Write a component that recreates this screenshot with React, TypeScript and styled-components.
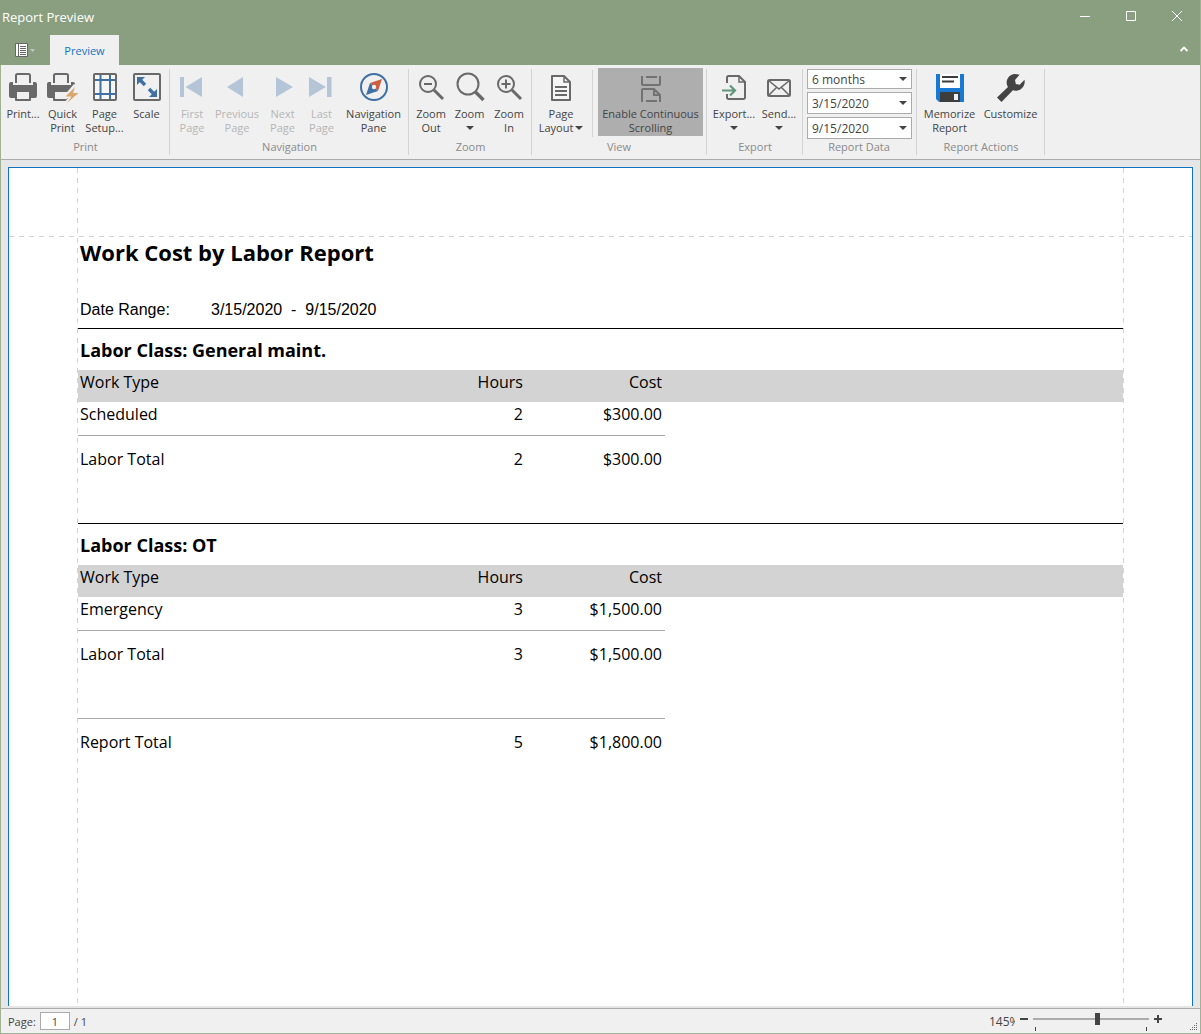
import React, { useState } from "react";
import styled, { createGlobalStyle, css } from "styled-components";

const ui = `"Open Sans", "Noto Sans", sans-serif`;
const ink = "#444444";
const steel = "#3f6fa3";
const iconGray = "#696969";

const GlobalStyle = createGlobalStyle`
  *, *::before, *::after { box-sizing: border-box; }
  body { margin: 0; font-family: ${ui}; font-size: 11px; color: ${ink}; }
  button, input, select { font: inherit; color: inherit; }
  button { background: none; border: 0; padding: 0; margin: 0; }
`;

const Window = styled.div`
  height: 100vh;
  display: flex;
  flex-direction: column;
  background: #e6e6e6;
  border: 1px solid #9fb394;
  border-top: 0;
`;

const Header = styled.header`
  background: #8a9f7f;
  color: #fff;
  margin: 0 0 0 -1px;
`;

const TitleRow = styled.div`
  display: flex;
  align-items: center;
  justify-content: space-between;
  height: 32px;
`;

const WindowTitle = styled.h1`
  margin: 0;
  padding: 2px 0 0 2px;
  font-size: 13px;
  font-weight: 400;
  line-height: 18px;
`;

const CaptionButtons = styled.div`
  display: flex;
`;

const CaptionButton = styled.button`
  display: grid;
  place-items: center;
  width: 46px;
  height: 32px;
`;

const TabRow = styled.div`
  display: flex;
  align-items: flex-end;
  height: 33px;
`;

const FileButton = styled.button`
  display: flex;
  align-items: center;
  justify-content: center;
  gap: 2px;
  width: 50px;
  height: 30px;
`;

const Tab = styled.button`
  width: 69px;
  height: 30px;
  background: #f0f0f0;
  color: #0f73c4;
`;

const CollapseButton = styled.button`
  display: grid;
  place-items: center;
  margin-left: auto;
  width: 32px;
  height: 32px;
`;

const Ribbon = styled.div`
  display: flex;
  height: 95px;
  padding: 4px 0;
  background: #f0f0f0;
  border-bottom: 1px solid #ababab;
`;

const Group = styled.section<{ $side?: number }>`
  display: flex;
  flex-direction: column;
  height: 86px;
  padding: 0 ${(p) => p.$side ?? 2}px 0 3px;
  border-right: 1px solid #d4d4d4;
`;

const GroupItems = styled.div`
  display: flex;
  height: 72px;
`;

const GroupCaption = styled.h2`
  margin: 0;
  font-size: 11px;
  font-weight: 400;
  line-height: 16px;
  text-align: center;
  color: #8a8a8a;
`;

const RibbonButton = styled.button<{ $width: number; $checked?: boolean }>`
  display: flex;
  flex-direction: column;
  align-items: center;
  width: ${(p) => p.$width}px;
  height: 68px;
  padding-top: 2px;
  white-space: nowrap;
  line-height: 14px;
  &:disabled { color: #b5b5b5; }
  ${(p) =>
    p.$checked &&
    css`
      background: #aeaeae;
      padding-top: 3px;
      margin-top: -1px;
    `}
`;

const IconBox = styled.span`
  display: grid;
  place-items: center;
  height: 32px;
  margin-bottom: 4px;
`;

const LabelLine = styled.span`
  display: flex;
  align-items: center;
  justify-content: center;
  gap: 2px;
  height: 14px;
`;

const ItemRule = styled.span`
  width: 1px;
  height: 67px;
  margin: 1px 5px 0;
  background: #d4d4d4;
`;

const ComboStack = styled.div`
  display: flex;
  flex-direction: column;
  gap: 3px;
  padding-left: 1px;
`;

const Combo = styled.label<{ $height: number }>`
  position: relative;
  display: flex;
  width: 105px;
  height: ${(p) => p.$height}px;
  font-size: 12px;
  svg { position: absolute; right: 5px; top: calc(50% - 2px); pointer-events: none; }
`;

const ComboSelect = styled.select`
  appearance: none;
  width: 100%;
  padding: 0 4px;
  border: 1px solid #ababab;
  border-radius: 0;
  background: #fff;
`;

const Workspace = styled.main`
  flex: 1;
  min-height: 0;
  display: flex;
  padding: 7px 7px 2px;
`;

const Sheet = styled.article`
  position: relative;
  flex: 1;
  overflow: hidden;
  padding: 68px 68px 0 69px;
  background: #fff;
  border: 1px solid #0f73c4;
  border-bottom: 0;
  font-size: 16px;
  line-height: 24px;
  color: #000;
`;

const Guide = styled.span<{ $edge: "left" | "right" | "top" }>`
  position: absolute;
  ${(p) =>
    p.$edge === "top"
      ? css`
          left: 0;
          right: 0;
          top: 68px;
          height: 1px;
          background: repeating-linear-gradient(90deg, #d3d3d3 0 5px, transparent 5px 10px);
        `
      : css`
          top: 0;
          bottom: 0;
          ${p.$edge}: 68px;
          width: 1px;
          background: repeating-linear-gradient(180deg, #d3d3d3 0 5px, #fff 5px 10px);
        `}
`;

const ReportHead = styled.header`
  height: 92px;
  padding-left: 2px;
`;

const ReportTitle = styled.h2`
  margin: 0;
  font-size: 22px;
  line-height: 32px;
  font-weight: 700;
`;

const DateRange = styled.p`
  display: flex;
  margin: 0;
  padding-top: 30px;
  font-family: "Liberation Sans", Arial, sans-serif;
  white-space: pre;
`;

const DateLabel = styled.span`
  width: 131px;
`;

const LaborSection = styled.section`
  height: 195px;
  border-top: 1px solid #000;
`;

const LaborHeading = styled.h3`
  margin: 0;
  padding: 7px 0 6px 2px;
  font-size: 18px;
  line-height: 28px;
  font-weight: 700;
`;

const CostTable = styled.table`
  width: 100%;
  table-layout: fixed;
  border-collapse: separate;
  border-spacing: 0;
  thead tr { background: #d3d3d3; }
`;

const Column = styled.col<{ $width?: number }>`
  width: ${(p) => (p.$width ? `${p.$width}px` : "auto")};
`;

const cell = css<{ $num?: boolean }>`
  padding: 0 3px 0 2px;
  vertical-align: top;
  font-weight: 400;
  text-align: ${(p) => (p.$num ? "right" : "left")};
`;

const HeadCell = styled.th<{ $num?: boolean }>`
  ${cell}
  height: 32px;
`;

const BodyCell = styled.td<{ $num?: boolean }>`
  ${cell}
  height: 33px;
`;

const TotalCell = styled.td<{ $num?: boolean }>`
  ${cell}
  height: 36px;
  padding-top: 11px;
  border-top: 1px solid #a9a9a9;
`;

const StatusBar = styled.footer`
  display: flex;
  align-items: center;
  justify-content: space-between;
  height: 25px;
  padding-left: 7px;
  background: #f0f0f0;
  border-top: 1px solid #ababab;
`;

const PageField = styled.label`
  display: flex;
  align-items: center;
  gap: 4px;
`;

const PageInput = styled.input`
  width: 30px;
  height: 18px;
  padding: 0;
  border: 1px solid #ababab;
  background: #fff;
  text-align: center;
`;

const ZoomControls = styled.div`
  display: flex;
  align-items: center;
  height: 24px;
`;

const ZoomValue = styled.output`
  width: 26px;
  overflow: hidden;
  font-size: 12px;
`;

const StepButton = styled.button`
  display: grid;
  place-items: center;
  width: 18px;
  height: 20px;
  padding-bottom: 4px;
`;

const SliderBox = styled.div`
  position: relative;
  display: flex;
  align-items: center;
  width: 116px;
  height: 20px;
  padding-bottom: 4px;
  &::before, &::after {
    content: "";
    position: absolute;
    bottom: 0;
    width: 1px;
    height: 4px;
    background: ${ink};
  }
  &::before { left: 2px; }
  &::after { right: 2px; }
`;

const Slider = styled.input`
  appearance: none;
  width: 100%;
  height: 12px;
  margin: 0;
  background: linear-gradient(#ababab, #ababab) center / 100% 2px no-repeat;
  &::-webkit-slider-thumb {
    appearance: none;
    width: 5px;
    height: 12px;
    background: ${ink};
  }
`;

const Grip = styled.svg`
  align-self: flex-end;
  margin: 0 2px 2px 23px;
`;

const Caret = () => (
  <svg width="8" height="4" viewBox="0 0 8 4" aria-hidden="true">
    <path d="M0 0h8L4 4z" fill={ink} />
  </svg>
);

const Svg = ({ w = 32, h = 32, children }: { w?: number; h?: number; children: React.ReactNode }) => (
  <svg width={w} height={h} viewBox={`0 0 ${w} ${h}`} fill="none" aria-hidden="true">
    {children}
  </svg>
);

const printerShape = (
  <>
    <path d="M9 12V4.500A1.500 1.500 0 0 1 10.500 3h11A1.500 1.500 0 0 1 23 4.500V12" stroke={iconGray} strokeWidth="2" />
    <path d="M2 13a2 2 0 0 1 2-2h2v3h20v-3h2a2 2 0 0 1 2 2v12a2 2 0 0 1-2 2h-4v-6H8v6H4a2 2 0 0 1-2-2z" fill={iconGray} />
    <path d="M9 21v8h14v-8" stroke={iconGray} strokeWidth="2" strokeLinejoin="round" />
  </>
);

const icons: Record<string, React.ReactNode> = {
  print: <Svg>{printerShape}</Svg>,
  quick: (
    <Svg>
      <g transform="translate(-2 0)">{printerShape}</g>
      <path d="M27 13L15 27h6l-4 5h13V15z" fill="#f0f0f0" />
      <path d="M28 16l-9.500 9.500h6L20 32 31.500 22h-5.500z" fill="#d9a66c" />
    </Svg>
  ),
  setup: (
    <Svg>
      <rect x="5" y="3" width="22" height="26" rx="1" fill="#f6f6f6" stroke={iconGray} strokeWidth="2" />
      <path d="M11.500 4v24M21 4v24M6 9h20M6 23h20" stroke={steel} strokeWidth="2" />
    </Svg>
  ),
  scale: (
    <Svg>
      <rect x="3" y="3" width="26" height="26" rx="1" stroke={iconGray} strokeWidth="2" />
      <path d="M6 6h8l-2.800 2.800 4 4-2.400 2.400-4-4L6 14zM26 26h-8l2.800-2.800-4-4 2.400-2.400 4 4L26 18z" fill={steel} />
    </Svg>
  ),
  first: <Svg><path d="M4 6h4v20H4zM26 6v20L9.500 16z" fill="#b4c5d8" /></Svg>,
  prev: <Svg><path d="M22 6v20L6 16z" fill="#b4c5d8" /></Svg>,
  next: <Svg><path d="M9 6v20l17-10z" fill="#b4c5d8" /></Svg>,
  last: <Svg><path d="M3 6v20l17-10zM21 6h4.500v20H21z" fill="#b4c5d8" /></Svg>,
  compass: (
    <Svg>
      <circle cx="16" cy="16" r="13" stroke={steel} strokeWidth="2" />
      <path d="M24 8l-4 12-8-8z" fill="#cc6040" />
      <path d="M8 24l4-12 8 8z" fill={steel} />
      <circle cx="16" cy="16" r="2.200" fill="#f0f0f0" />
    </Svg>
  ),
  zoomOut: (
    <Svg>
      <circle cx="13" cy="13" r="8" stroke={iconGray} strokeWidth="2" />
      <path d="M9 13h8" stroke={iconGray} strokeWidth="2" />
      <path d="M19 19l9 9" stroke={iconGray} strokeWidth="3" />
    </Svg>
  ),
  zoom: (
    <Svg>
      <circle cx="14" cy="13" r="10.500" stroke={iconGray} strokeWidth="2" />
      <path d="M21.500 21l8 8" stroke={iconGray} strokeWidth="3.400" />
    </Svg>
  ),
  zoomIn: (
    <Svg>
      <circle cx="13" cy="13" r="8" stroke={iconGray} strokeWidth="2" />
      <path d="M8.500 13h9M13 8.500v9" stroke={iconGray} strokeWidth="2" />
      <path d="M19 19l9 9" stroke={iconGray} strokeWidth="3" />
    </Svg>
  ),
  layout: (
    <Svg>
      <path d="M7 5h12l6 6v18H7z" fill="#f6f6f6" stroke={iconGray} strokeWidth="2" strokeLinejoin="round" />
      <path d="M19 5v6h6" stroke={iconGray} strokeWidth="1.500" />
      <path d="M10 16h12M10 20h12M10 24h12" stroke={iconGray} strokeWidth="2" />
    </Svg>
  ),
  continuous: (
    <Svg>
      <path d="M7 5v8a1 1 0 0 0 1 1h16a1 1 0 0 0 1-1V5M11 6h11" stroke="#727272" strokeWidth="2" />
      <path d="M7 31V19a1 1 0 0 1 1-1h11l6 6v7M19 18v6h6M11 30h11" stroke="#727272" strokeWidth="2" />
    </Svg>
  ),
  exportDoc: (
    <Svg>
      <path d="M9 12V6.500A1.500 1.500 0 0 1 10.500 5H21l6 6v15.500a1.500 1.500 0 0 1-1.500 1.500h-15A1.500 1.500 0 0 1 9 26.500V23" stroke={iconGray} strokeWidth="2" />
      <path d="M21 5v6h6" stroke={iconGray} strokeWidth="1.500" />
      <path d="M4 19.500h12M12 14.500l5 5-5 5" stroke="#62957c" strokeWidth="2.200" />
    </Svg>
  ),
  send: (
    <Svg>
      <rect x="5" y="9" width="22" height="16" rx="1.500" stroke={iconGray} strokeWidth="2" />
      <path d="M5.500 9.500L16 18l10.500-8.500M5.500 24.500l8-8M26.500 24.500l-8-8" stroke={iconGray} strokeWidth="1.600" />
    </Svg>
  ),
  save: (
    <Svg>
      <path d="M2 3h28v28H5l-3-3z" fill="#1879d4" />
      <path d="M6 3h20v14H6z" fill="#fff" />
      <path d="M8 6h16M8 10.500h12" stroke="#3d3d3d" strokeWidth="2" />
      <path d="M6 21h20v10H6z" fill="#3d3d3d" />
      <path d="M20 23h4v6h-4z" fill="#f0f0f0" />
    </Svg>
  ),
  wrench: (
    <Svg>
      <path d="M2 26.500L13 16A8.500 8.500 0 0 1 22 3.200c1 0 2 .2 2.600.5L20 9l.8 4 3.900.8 4.800-5c1.200 6-3.500 11.200-9 10.900-1 0-1.800-.2-2.600-.5L6.500 31z" fill="#444" />
    </Svg>
  ),
};

type Item = {
  icon: string;
  lines: string[];
  width: number;
  caret?: "below" | "inline";
  disabled?: boolean;
  checked?: boolean;
  ruleBefore?: boolean;
};

const Command = ({ item }: { item: Item }) => (
  <>
    {item.ruleBefore && <ItemRule />}
    <RibbonButton
      type="button"
      $width={item.width}
      $checked={item.checked}
      disabled={item.disabled}
      aria-pressed={item.checked}
    >
      <IconBox>{icons[item.icon]}</IconBox>
      {item.lines.map((line, i) => (
        <LabelLine key={line}>
          {line}
          {item.caret === "inline" && i === item.lines.length - 1 && <Caret />}
        </LabelLine>
      ))}
      {item.caret === "below" && (
        <LabelLine>
          <Caret />
        </LabelLine>
      )}
    </RibbonButton>
  </>
);

const groups: { caption: string; items: Item[]; side?: number }[] = [
  {
    caption: "Print",
    items: [
      { icon: "print", lines: ["Print..."], width: 38 },
      { icon: "quick", lines: ["Quick", "Print"], width: 41 },
      { icon: "setup", lines: ["Page", "Setup..."], width: 43 },
      { icon: "scale", lines: ["Scale"], width: 41 },
    ],
  },
  {
    caption: "Navigation",
    items: [
      { icon: "first", lines: ["First", "Page"], width: 38, disabled: true },
      { icon: "prev", lines: ["Previous", "Page"], width: 52, disabled: true },
      { icon: "next", lines: ["Next", "Page"], width: 39, disabled: true },
      { icon: "last", lines: ["Last", "Page"], width: 39, disabled: true },
      { icon: "compass", lines: ["Navigation", "Pane"], width: 65 },
    ],
  },
  {
    caption: "Zoom",
    items: [
      { icon: "zoomOut", lines: ["Zoom", "Out"], width: 38 },
      { icon: "zoom", lines: ["Zoom"], width: 39, caret: "below" },
      { icon: "zoomIn", lines: ["Zoom", "In"], width: 40 },
    ],
  },
  {
    caption: "View",
    side: 3,
    items: [
      { icon: "layout", lines: ["Page", "Layout"], width: 52, caret: "inline" },
      { icon: "continuous", lines: ["Enable Continuous", "Scrolling"], width: 105, checked: true, ruleBefore: true },
    ],
  },
  {
    caption: "Export",
    items: [
      { icon: "exportDoc", lines: ["Export..."], width: 48, caret: "below" },
      { icon: "send", lines: ["Send..."], width: 42, caret: "below" },
    ],
  },
];

const actions: Item[] = [
  { icon: "save", lines: ["Memorize", "Report"], width: 59 },
  { icon: "wrench", lines: ["Customize"], width: 63 },
];

const combos = [
  { label: "Period", value: "6 months", height: 20 },
  { label: "Start date", value: "3/15/2020", height: 22 },
  { label: "End date", value: "9/15/2020", height: 22 },
];

const labor = [
  { name: "General maint.", type: "Scheduled", hours: "2", cost: "$300.00" },
  { name: "OT", type: "Emergency", hours: "3", cost: "$1,500.00" },
];

const Columns = () => (
  <colgroup>
    <Column $width={308} />
    <Column $width={140} />
    <Column $width={139} />
    <Column />
  </colgroup>
);

const TotalRow = ({ label, hours, cost }: { label: string; hours: string; cost: string }) => (
  <tr>
    <TotalCell>{label}</TotalCell>
    <TotalCell $num>{hours}</TotalCell>
    <TotalCell $num>{cost}</TotalCell>
  </tr>
);

export default function App() {
  const [zoom, setZoom] = useState(145);
  const [page, setPage] = useState("1");

  return (
    <>
      <GlobalStyle />
      <Window>
        <Header>
          <TitleRow>
            <WindowTitle>Report Preview</WindowTitle>
            <CaptionButtons>
              <CaptionButton type="button" aria-label="Minimize">
                <Svg w={10} h={10}><path d="M0 5.500h10" stroke="#fff" /></Svg>
              </CaptionButton>
              <CaptionButton type="button" aria-label="Maximize">
                <Svg w={10} h={10}><path d="M.5.5h9v9h-9z" stroke="#fff" /></Svg>
              </CaptionButton>
              <CaptionButton type="button" aria-label="Close">
                <Svg w={10} h={10}><path d="M0 0l10 10M10 0L0 10" stroke="#fff" /></Svg>
              </CaptionButton>
            </CaptionButtons>
          </TitleRow>
          <TabRow>
            <FileButton type="button" aria-label="File">
              <Svg w={13} h={14}>
                <path d="M.5.5h12v13H.5z" fill="#fff" stroke="#666" />
                <path d="M3.500 1v12M5 3.500h6M5 5.500h6M5 7.500h6M5 9.500h6M5 11.500h6" stroke="#666" />
              </Svg>
              <Svg w={5} h={3}><path d="M0 0h5L2.500 3z" fill="#c5c5c5" /></Svg>
            </FileButton>
            <Tab type="button">Preview</Tab>
            <CollapseButton type="button" aria-label="Collapse ribbon">
              <Svg w={8} h={6}><path d="M.5 5L4 1.500 7.500 5" stroke="#fff" strokeWidth="1.800" /></Svg>
            </CollapseButton>
          </TabRow>
        </Header>

        <Ribbon>
          {groups.map((g) => (
            <Group key={g.caption} $side={g.side}>
              <GroupItems>
                {g.items.map((item) => (
                  <Command key={item.icon} item={item} />
                ))}
              </GroupItems>
              <GroupCaption>{g.caption}</GroupCaption>
            </Group>
          ))}
          <Group $side={4}>
            <GroupItems>
              <ComboStack>
                {combos.map((c) => (
                  <Combo key={c.label} $height={c.height}>
                    <ComboSelect aria-label={c.label}>
                      <option>{c.value}</option>
                    </ComboSelect>
                    <Caret />
                  </Combo>
                ))}
              </ComboStack>
            </GroupItems>
            <GroupCaption>Report Data</GroupCaption>
          </Group>
          <Group>
            <GroupItems>
              {actions.map((item) => (
                <Command key={item.icon} item={item} />
              ))}
            </GroupItems>
            <GroupCaption>Report Actions</GroupCaption>
          </Group>
        </Ribbon>

        <Workspace>
          <Sheet>
            <ReportHead>
              <ReportTitle>Work Cost by Labor Report</ReportTitle>
              <DateRange>
                <DateLabel>Date Range:</DateLabel>
                <span>{"3/15/2020  -  9/15/2020"}</span>
              </DateRange>
            </ReportHead>
            {labor.map((l) => (
              <LaborSection key={l.name}>
                <LaborHeading>Labor Class: {l.name}</LaborHeading>
                <CostTable>
                  <Columns />
                  <thead>
                    <tr>
                      <HeadCell scope="col">Work Type</HeadCell>
                      <HeadCell scope="col" $num>Hours</HeadCell>
                      <HeadCell scope="col" $num>Cost</HeadCell>
                      <HeadCell as="td" />
                    </tr>
                  </thead>
                  <tbody>
                    <tr>
                      <BodyCell>{l.type}</BodyCell>
                      <BodyCell $num>{l.hours}</BodyCell>
                      <BodyCell $num>{l.cost}</BodyCell>
                    </tr>
                  </tbody>
                  <tfoot>
                    <TotalRow label="Labor Total" hours={l.hours} cost={l.cost} />
                  </tfoot>
                </CostTable>
              </LaborSection>
            ))}
            <CostTable>
              <Columns />
              <tbody>
                <TotalRow label="Report Total" hours="5" cost="$1,800.00" />
              </tbody>
            </CostTable>
            <Guide $edge="left" />
            <Guide $edge="right" />
            <Guide $edge="top" />
          </Sheet>
        </Workspace>

        <StatusBar>
          <PageField>
            Page:
            <PageInput value={page} onChange={(e) => setPage(e.target.value)} />
            <span>/ 1</span>
          </PageField>
          <ZoomControls>
            <ZoomValue>{zoom}%</ZoomValue>
            <StepButton type="button" aria-label="Zoom out" onClick={() => setZoom(zoom - 5)}>
              <Svg w={8} h={8}><path d="M0 4h8" stroke={ink} strokeWidth="2" /></Svg>
            </StepButton>
            <SliderBox>
              <Slider
                type="range"
                aria-label="Zoom level"
                min={10}
                max={250}
                value={zoom}
                onChange={(e) => setZoom(Number(e.target.value))}
              />
            </SliderBox>
            <StepButton type="button" aria-label="Zoom in" onClick={() => setZoom(zoom + 5)}>
              <Svg w={8} h={8}><path d="M0 4h8M4 0v8" stroke={ink} strokeWidth="2" /></Svg>
            </StepButton>
            <Grip width="8" height="8" viewBox="0 0 8 8" aria-hidden="true">
              <path
                d="M6 0h1v1H6zM4 2h1v1H4zM6 2h1v1H6zM2 4h1v1H2zM4 4h1v1H4zM6 4h1v1H6zM0 6h1v1H0zM2 6h1v1H2zM4 6h1v1H4zM6 6h1v1H6z"
                fill="#666"
              />
            </Grip>
          </ZoomControls>
        </StatusBar>
      </Window>
    </>
  );
}
